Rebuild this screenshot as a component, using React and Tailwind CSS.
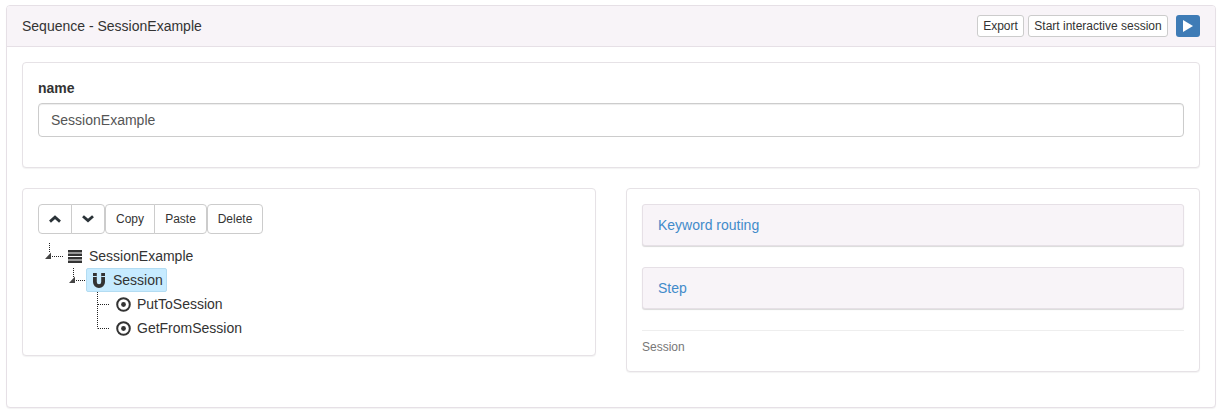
const Chevron = ({ down }) => (
  <svg width="12" height="10" viewBox="0 0 12 10" className="block">
    <path d={down ? "M1 2.2 L6 6.6 L11 2.2" : "M1 7.6 L6 3.2 L11 7.6"} fill="none" stroke="#2b3338" strokeWidth="2.8" />
  </svg>
);

const TargetIcon = () => (
  <svg width="15" height="15" viewBox="0 0 15 15" className="block shrink-0">
    <circle cx="7.5" cy="7.5" r="6.3" fill="none" stroke="#333" strokeWidth="2" />
    <circle cx="7.5" cy="7.5" r="2.4" fill="#333" />
  </svg>
);

const ListIcon = () => (
  <svg width="14" height="13" viewBox="0 0 14 13" className="block shrink-0">
    <rect x="0" y="0" width="14" height="2.5" fill="#333" />
    <rect x="0" y="3.5" width="14" height="2.5" fill="#333" />
    <rect x="0" y="7" width="14" height="2.5" fill="#333" />
    <rect x="0" y="10.5" width="14" height="2.5" fill="#333" />
  </svg>
);

const MagnetIcon = () => (
  <svg width="12" height="15" viewBox="0 0 12 15" className="block shrink-0">
    <path d="M0 0 H3.8 V9 A2.2 2.2 0 0 0 8.2 9 V0 H12 V9 A6 6 0 0 1 0 9 Z" fill="#333" />
    <rect x="0" y="3" width="3.8" height="1" fill="#c7ebff" />
    <rect x="8.2" y="3" width="3.8" height="1" fill="#c7ebff" />
  </svg>
);

const TreeLines = () => (
  <svg width="90" height="100" viewBox="0 0 90 100" className="absolute left-0 top-0 overflow-visible pointer-events-none">
    <g stroke="#222" strokeWidth="1" strokeDasharray="1 1" fill="none">
      <path d="M11.5 -1 V8" />
      <path d="M14 12.5 H25" />
      <path d="M35.5 24 V33" />
      <path d="M38 36.5 H48" />
      <path d="M59.5 48 V84.5" />
      <path d="M60 60.5 H72" />
      <path d="M60 84.5 H72" />
    </g>
    <path d="M7 15 L13 8.5 V15 Z" fill="#444" />
    <path d="M31 39 L37 32.5 V39 Z" fill="#444" />
  </svg>
);

const TreeRow = ({ pad, children }) => (
  <div className={`flex h-6 items-center ${pad}`}>{children}</div>
);

const ToolBtn = ({ className, children }) => (
  <button className={`flex h-[30px] items-center justify-center border border-[#ccc] bg-white text-xs text-[#333] ${className}`}>
    {children}
  </button>
);

const Panel = ({ children }) => (
  <div className="flex h-[42px] items-center rounded-[3px] border border-[#e6e0e6] bg-[#f8f4f8] pl-[15px] text-sm text-[#428bca] shadow-[0_1px_1px_rgba(0,0,0,0.15)]">
    {children}
  </div>
);

export default function App() {
  return (
    <div className="min-h-[413px] bg-white px-[6px] pt-[5px] font-['Liberation_Sans',Arial,sans-serif] text-sm text-[#333]">
      <div className="h-[403px] w-[1210px] rounded-[4px] border border-[#e6e0e6] bg-white shadow-[0_1px_1px_rgba(0,0,0,0.05)]">
        <div className="flex h-[41px] items-center justify-between rounded-t-[3px] border-b border-[#e6e0e6] bg-[#f8f4f8] pl-[15px] pr-[15px]">
          <span className="text-sm">Sequence - SessionExample</span>
          <div className="flex items-center">
            <button className="h-[22px] w-[47px] rounded-[3px] border border-[#ccc] bg-white text-xs text-[#333]">Export</button>
            <button className="ml-1 h-[22px] w-[140px] rounded-[3px] border border-[#ccc] bg-white text-xs text-[#333]">Start interactive session</button>
            <button className="ml-2 flex h-[22px] w-6 items-center justify-center rounded-[3px] bg-[#3f7cb6]">
              <svg width="10" height="12" viewBox="0 0 10 12" className="block"><path d="M0 0 L10 6 L0 12 Z" fill="#fff" /></svg>
            </button>
          </div>
        </div>
        <div className="px-[15px] pt-[15px]">
          <div className="h-[106px] rounded-[4px] border border-[#e6e2e6] bg-white px-[15px] pt-[15px] shadow-[0_1px_1px_rgba(0,0,0,0.05)]">
            <div className="text-sm leading-5 font-bold">name</div>
            <div className="mt-[5px] flex h-[34px] items-center rounded-[4px] border border-[#ccc] pl-3 text-sm text-[#555] shadow-[inset_0_1px_1px_rgba(0,0,0,0.075)]">SessionExample</div>
          </div>
          <div className="mt-[20px] flex items-start justify-between">
            <div className="h-[168px] w-[574px] rounded-[4px] border border-[#e6e2e6] bg-white px-[15px] pt-[15px] shadow-[0_1px_1px_rgba(0,0,0,0.05)]">
              <div className="flex">
                <ToolBtn className="w-[34px] rounded-l-[4px]"><Chevron /></ToolBtn>
                <ToolBtn className="-ml-px w-[34px] rounded-r-[4px]"><Chevron down /></ToolBtn>
                <ToolBtn className="w-[50px] rounded-l-[4px]">Copy</ToolBtn>
                <ToolBtn className="-ml-px w-[53px] rounded-r-[4px]">Paste</ToolBtn>
                <ToolBtn className="w-[56px] rounded-[4px]">Delete</ToolBtn>
              </div>
              <div className="relative mt-[10px]">
                <TreeLines />
                <TreeRow pad="pl-[30px]"><ListIcon /><span className="ml-[7px]">SessionExample</span></TreeRow>
                <TreeRow pad="pl-[48px]">
                  <div className="flex h-6 w-[81px] items-center rounded-[2px] border border-[#b3dcf2] bg-[#c7ebff] pl-[6px]">
                    <MagnetIcon /><span className="ml-2">Session</span>
                  </div>
                </TreeRow>
                <TreeRow pad="pl-[78px]"><TargetIcon /><span className="ml-[6px]">PutToSession</span></TreeRow>
                <TreeRow pad="pl-[78px]"><TargetIcon /><span className="ml-[6px]">GetFromSession</span></TreeRow>
              </div>
            </div>
            <div className="h-[184px] w-[574px] rounded-[4px] border border-[#e6e2e6] bg-white px-[15px] pt-[15px] shadow-[0_1px_1px_rgba(0,0,0,0.05)]">
              <Panel>Keyword routing</Panel>
              <div className="mt-[21px]"><Panel>Step</Panel></div>
              <div className="mt-[21px] border-t border-[#eee] pt-[8px] text-xs leading-[17px] text-[#777]">Session</div>
            </div>
          </div>
        </div>
      </div>
    </div>
  );
}
